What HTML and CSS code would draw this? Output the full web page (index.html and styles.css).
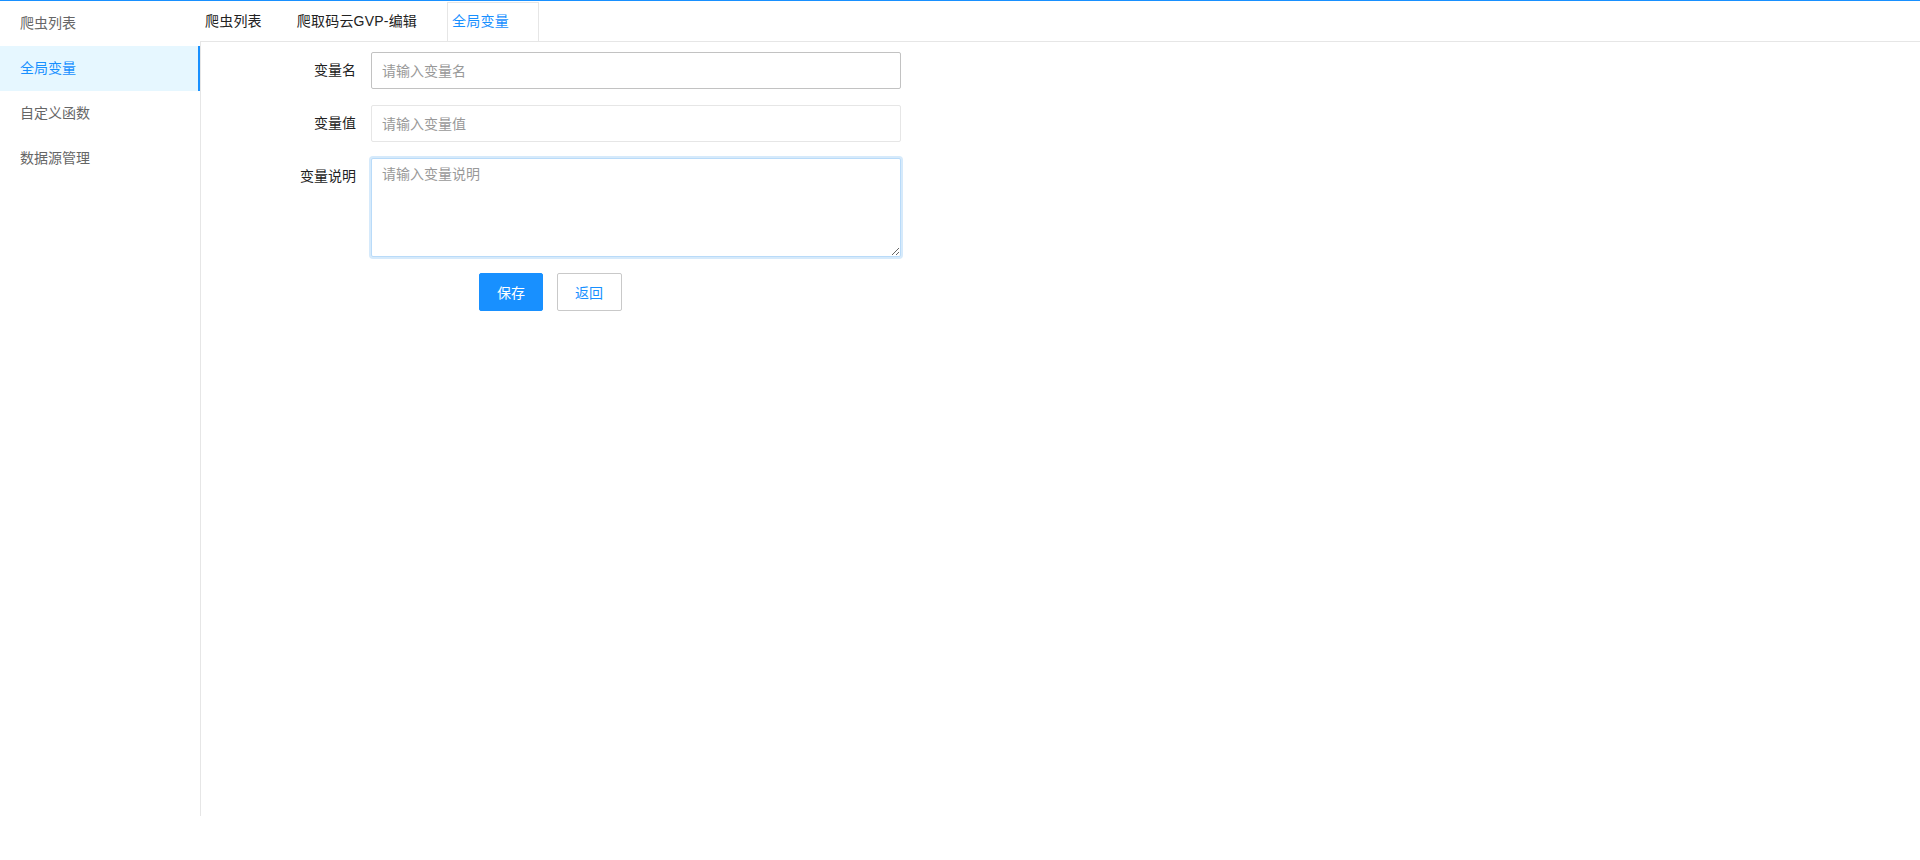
FILE: index.html
```html
<!doctype html>
<html>
<head>
    <meta charset='utf-8'>
    <title>全局变量</title>
    <link rel="stylesheet" href="styles.css">
</head>
<body>
<div class='app'>
    <ul class='side'>
        <li class='side-item'>爬虫列表</li>
        <li class='side-item active'>全局变量</li>
        <li class='side-item'>自定义函数</li>
        <li class='side-item'>数据源管理</li>
    </ul>
    <div class='main'>
        <div class='tabs'>
            <div class='tab'>爬虫列表</div>
            <div class='tab'>爬取码云GVP-编辑</div>
            <div class='tab active'>全局变量</div>
        </div>
        <div class='pane'>
            <form class='form'>
                <div class='form-item'>
                    <label class='form-label'>变量名</label>
                    <input class='form-input hover' type='text' placeholder='请输入变量名'>
                </div>
                <div class='form-item'>
                    <label class='form-label'>变量值</label>
                    <input class='form-input' type='text' placeholder='请输入变量值'>
                </div>
                <div class='form-item'>
                    <label class='form-label'>变量说明</label>
                    <textarea class='form-textarea' placeholder='请输入变量说明'></textarea>
                </div>
                <div class='form-btns'>
                    <button type='button' class='btn btn-primary'>保存</button>
                    <button type='button' class='btn btn-default'>返回</button>
                </div>
            </form>
        </div>
    </div>
</div>
</body>
</html>
```

FILE: styles.css
```css
*{margin:0;padding:0;box-sizing:border-box;}
body{font-family:"Liberation Sans","Noto Sans CJK SC",sans-serif;font-size:14px;color:#333;background:#fff;}

.app{display:flex;height:816px;border-top:1px solid #1890ff;}

/* 左侧菜单 */
.side{width:200px;list-style:none;flex-shrink:0;}
.side-item{height:45px;line-height:45px;padding-left:20px;color:#666;cursor:pointer;}
.side-item.active{background:#e6f7ff;color:#1890ff;border-right:2px solid #1890ff;}

/* 右侧 */
.main{flex:1;display:flex;flex-direction:column;}
.tabs{height:40px;display:flex;align-items:flex-end;}
.tab{height:39px;line-height:37px;padding:0 29px 0 4px;border:1px solid transparent;border-bottom:none;color:#222;letter-spacing:0.2px;cursor:pointer;}
.tab.active{border-color:#e6e6e6;color:#1890ff;}

.pane{flex:1;border-top:1px solid #e6e6e6;border-left:1px solid #e6e6e6;padding-top:10px;}

.form-item{display:flex;align-items:flex-start;margin-bottom:16px;}
.form-label{width:155px;margin-right:15px;text-align:right;line-height:37px;color:#222;}
.form-input{width:530px;height:37px;padding:0 10px;border:1px solid #e6e6e6;border-radius:2px;font:inherit;color:#333;outline:none;}
.form-input.hover{border-color:#c2c2c2;}
.form-textarea{width:530px;height:99px;padding:4px 10px;border:1px solid #b9dbf9;border-radius:2px;box-shadow:0 0 0 2px #d6eafb;font:inherit;color:#333;outline:none;resize:both;}
.form-input::placeholder,.form-textarea::placeholder{color:#999;}

.form-btns{display:flex;gap:14px;padding-left:278px;}
.btn{height:38px;padding:0 17px;border-radius:2px;font:inherit;cursor:pointer;}
.btn-primary{background:#1890ff;border:1px solid #1890ff;color:#fff;}
.btn-default{background:#fff;border:1px solid #c9c9c9;color:#1890ff;padding:0 18px 0 17px;}
```
